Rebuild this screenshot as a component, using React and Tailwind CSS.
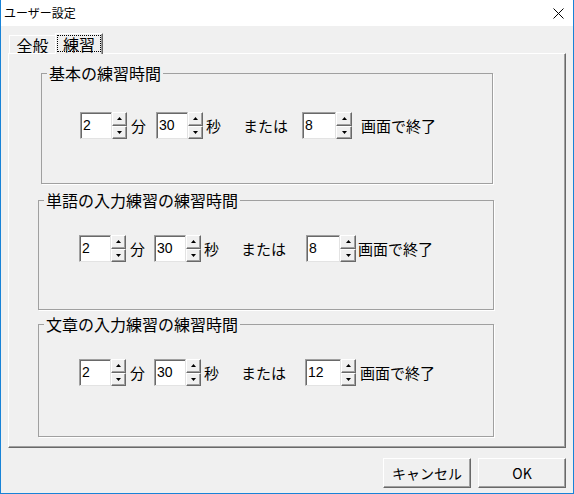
import React from 'react';

const jp = "font-['Noto_Sans_CJK_JP','Noto_Sans',sans-serif]";

const SpinButton = ({ up }) => (
  <div className="flex-1 flex items-center justify-center bg-[#f0f0f0] border border-t-white border-l-white border-b-[#696969] border-r-[#696969] shadow-[inset_-1px_-1px_0_#a0a0a0]">
    <svg width="5" height="3" viewBox="0 0 5 3">
      {up ? <polygon points="2.5,0 5,3 0,3" fill="#000" /> : <polygon points="0,0 5,0 2.5,3" fill="#000" />}
    </svg>
  </div>
);

const Spinner = ({ value, editW = 'w-[32px]', spinW = 'w-[15px]' }) => (
  <div className="flex h-[27px]">
    <div
      className={`${editW} h-full bg-white border border-t-[#a0a0a0] border-l-[#a0a0a0] border-b-[#e3e3e3] border-r-[#e3e3e3] shadow-[inset_1px_1px_0_#696969] pl-[2px] pt-[3px] text-[14px] leading-[18px] text-black font-['Liberation_Sans',sans-serif]`}
    >
      {value}
    </div>
    <div className={`${spinW} h-full flex flex-col`}>
      <SpinButton up />
      <SpinButton />
    </div>
  </div>
);

const Label = ({ children, className = '' }) => (
  <span className={`text-[15px] leading-[18px] text-black ${jp} ${className}`}>{children}</span>
);

const Group = ({ title, className, children }) => (
  <fieldset className={`border border-[#a0a0a0] shadow-[1px_1px_0_#fff] ${className}`}>
    <legend className={`ml-[5px] px-[2px] text-[16px] leading-[18px] text-black ${jp}`}>{title}</legend>
    {children}
  </fieldset>
);

const WinButton = ({ children }) => (
  <button className={`w-[88px] h-[30px] bg-[#f0f0f0] border border-t-white border-l-white border-b-[#696969] border-r-[#696969] shadow-[inset_-1px_-1px_0_#a0a0a0] text-[14px] text-black ${jp}`}>
    {children}
  </button>
);

export default function App() {
  return (
    <div className="w-[574px] h-[494px] flex flex-col border-x border-b border-[#1883d7] bg-[#f0f0f0] overflow-hidden">
      {/* Title bar */}
      <div className="h-[26px] bg-white flex items-center justify-between pl-[3px] pr-[9px]">
        <span className={`text-[12px] text-black ${jp}`}>ユーザー設定</span>
        <svg width="11" height="11" viewBox="0 0 11 11">
          <path d="M0.5 0.5 L10.5 10.5 M10.5 0.5 L0.5 10.5" stroke="#000" strokeWidth="1" />
        </svg>
      </div>

      <div className="flex-1 flex flex-col px-[7px] pt-[7px]">
        {/* Tabs */}
        <div className="flex items-end h-[20px]">
          <div className={`h-[18px] w-[46px] ml-[1px] border-t border-l border-white flex items-center justify-center text-[16px] text-black ${jp}`}>
            全般
          </div>
          <div className="relative z-10 h-[21px] w-[48px] -mb-px bg-[#f0f0f0] border-t border-l border-white border-r border-r-[#696969] shadow-[inset_-1px_0_0_#a0a0a0] flex pt-[1px] px-[1px] pb-[2px]">
            <div className={`flex-1 border border-dotted border-black flex items-center justify-center text-[16px] text-black ${jp}`}>
              練習
            </div>
          </div>
        </div>

        {/* Tab panel */}
        <div className="h-[395px] border border-t-white border-l-white border-b-[#696969] border-r-[#696969] shadow-[inset_-1px_-1px_0_#a0a0a0] flex flex-col">
          <Group title="基本の練習時間" className="mt-[10px] ml-[32px] w-[452px] h-[120px] pt-[30px]">
            <div className="flex items-center ml-[38px]">
              <Spinner value="2" />
              <Label className="ml-[4px]">分</Label>
              <div className="ml-[10px]"><Spinner value="30" /></div>
              <Label className="ml-[3px]">秒</Label>
              <Label className="ml-[22px]">または</Label>
              <div className="ml-[14px]"><Spinner value="8" editW="w-[34px]" spinW="w-[16px]" /></div>
              <Label className="ml-[9px]">画面で終了</Label>
            </div>
          </Group>

          <Group title="単語の入力練習の練習時間" className="mt-[7px] ml-[29px] w-[456px] h-[119px] pt-[26px]">
            <div className="flex items-center ml-[40px]">
              <Spinner value="2" />
              <Label className="ml-[4px]">分</Label>
              <div className="ml-[9px]"><Spinner value="30" /></div>
              <Label className="ml-[3px]">秒</Label>
              <Label className="ml-[22px]">または</Label>
              <div className="ml-[20px]"><Spinner value="8" editW="w-[34px]" spinW="w-[16px]" /></div>
              <Label className="ml-[2px]">画面で終了</Label>
            </div>
          </Group>

          <Group title="文章の入力練習の練習時間" className="mt-[5px] ml-[29px] w-[456px] h-[122px] pt-[26px]">
            <div className="flex items-center ml-[40px]">
              <Spinner value="2" />
              <Label className="ml-[4px]">分</Label>
              <div className="ml-[9px]"><Spinner value="30" /></div>
              <Label className="ml-[3px]">秒</Label>
              <Label className="ml-[22px]">または</Label>
              <div className="ml-[19px]"><Spinner value="12" editW="w-[36px]" /></div>
              <Label className="ml-[4px]">画面で終了</Label>
            </div>
          </Group>
        </div>

        {/* Buttons */}
        <div className="flex justify-end gap-[7px] mt-[10px]">
          <WinButton>キャンセル</WinButton>
          <WinButton>OK</WinButton>
        </div>
      </div>
    </div>
  );
}
